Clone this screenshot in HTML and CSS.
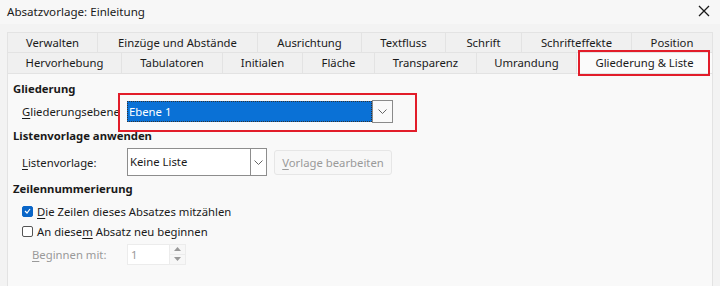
FILE: index.html
```html
<!DOCTYPE html>
<html lang="de">
<head>
  <meta charset="UTF-8" />
  <title>Absatzvorlage: Einleitung</title>
  <link rel="stylesheet" href="styles.css">
</head>
<body>
<div class="dialog">
  <div class="titlebar">
    <span class="title">Absatzvorlage: Einleitung</span>
    <svg class="close" width="12" height="12" viewBox="0 0 12 12">
      <path d="M1 1 L11 11 M11 1 L1 11" stroke="#1a1a1a" stroke-width="1.3" fill="none" />
    </svg>
  </div>

  <div class="tabs">
    <div class="tab-row row1">
      <div class="tab">Verwalten</div>
      <div class="tab">Einzüge und Abstände</div>
      <div class="tab">Ausrichtung</div>
      <div class="tab">Textfluss</div>
      <div class="tab">Schrift</div>
      <div class="tab">Schrifteffekte</div>
      <div class="tab">Position</div>
    </div>
    <div class="tab-row row2">
      <div class="tab">Hervorhebung</div>
      <div class="tab">Tabulatoren</div>
      <div class="tab">Initialen</div>
      <div class="tab">Fläche</div>
      <div class="tab">Transparenz</div>
      <div class="tab">Umrandung</div>
      <div class="tab active">Gliederung &amp; Liste<span class="mark tab-mark"></span></div>
    </div>
  </div>

  <div class="panel">
    <div class="heading">Gliederung</div>
    <div class="field-row outline-row">
      <label class="label"><u>G</u>liederungsebene</label>
      <div class="select level-select">
        <span class="select-value">Ebene 1</span>
        <span class="select-btn"><svg width="9" height="5" viewBox="0 0 9 5"><path d="M0.5 0.5 L4.5 4.5 L8.5 0.5" stroke="#666" fill="none"/></svg></span>
      </div>
      <span class="mark level-mark"></span>
    </div>

    <div class="heading list-heading">Listenvorlage anwenden</div>
    <div class="field-row list-row">
      <label class="label"><u>L</u>istenvorlage:</label>
      <div class="combo">
        <span class="combo-value">Keine Liste</span>
        <span class="combo-btn"><svg width="9" height="5" viewBox="0 0 9 5"><path d="M0.5 0.5 L4.5 4.5 L8.5 0.5" stroke="#666" fill="none"/></svg></span>
      </div>
      <div class="button disabled"><u>V</u>orlage bearbeiten</div>
    </div>

    <div class="heading numbering-heading">Zeilennummerierung</div>
    <div class="check-row first-check">
      <span class="checkbox checked"><svg width="7" height="6" viewBox="0 0 7 6"><path d="M1 3 L3 5 L6 1" stroke="#fff" stroke-width="1.2" fill="none"/></svg></span>
      <span><u>D</u>ie Zeilen dieses Absatzes mitzählen</span>
    </div>
    <div class="check-row">
      <span class="checkbox"></span>
      <span>An diese<u>m</u> Absatz neu beginnen</span>
    </div>
    <div class="field-row start-row">
      <label class="label dim"><u>B</u>eginnen mit:</label>
      <div class="spin">
        <span class="spin-value">1</span>
        <span class="spin-btns">
          <span class="spin-btn"><svg width="7" height="4" viewBox="0 0 7 4"><path d="M0 4 L3.5 0 L7 4 Z" fill="#999"/></svg></span>
          <span class="spin-btn"><svg width="7" height="4" viewBox="0 0 7 4"><path d="M0 0 L3.5 4 L7 0 Z" fill="#999"/></svg></span>
        </span>
      </div>
    </div>
  </div>
</div>
</body>
</html>
```

FILE: styles.css
```css
body {
  margin: 0;
  padding: 0;
  background: #f3f3f3;
  font-family: 'Noto Sans', 'Open Sans', sans-serif;
  font-size: 11.3px;
  color: #1a1a1a;
}
u {
  text-decoration: underline;
  text-underline-offset: 2px;
}
.dialog {
  width: 720px;
  height: 286px;
  overflow: hidden;
  position: relative;
}
.titlebar {
  height: 24px;
  box-sizing: border-box;
  display: flex;
  align-items: center;
  justify-content: space-between;
  padding: 0 8px 2px 7px;
  background: #f7f7f7;
  font-size: 11.6px;
}
.close {
  margin-right: 2px;
}
.tabs {
  padding: 8px 7px 0 7px;
}
.tab-row {
  display: grid;
  height: 20px;
}
.row1 {
  grid-template-columns: 91px 160px 104px 84px 76px 110px 81px;
}
.row2 {
  grid-template-columns: 115px 101px 80px 72px 102px 100px 136px;
  height: 21px;
}
.tab {
  background: #f0f0f0;
  border-top: 1px solid #e3e3e3;
  border-right: 1px solid #e3e3e3;
  text-align: center;
  line-height: 19px;
  white-space: nowrap;
  position: relative;
}
.tab:first-child {
  border-left: 1px solid #e3e3e3;
}
.tab.active {
  background: #fbfbfb;
}
.mark {
  position: absolute;
  border: 2px solid #e21d2a;
  box-sizing: border-box;
}
.tab-mark {
  left: 1px;
  top: -3px;
  width: 132px;
  height: 26px;
}
.panel {
  margin: 0 7px;
  height: 220px;
  background: #f9f9f9;
  border-left: 1px solid #e3e3e3;
  border-right: 1px solid #e3e3e3;
  border-top: 1px solid #e3e3e3;
  padding: 6px 0 0 5px;
}
.heading {
  font-weight: bold;
  line-height: 17px;
}
.list-heading {
  margin-top: 2px;
}
.numbering-heading {
  margin-top: 3px;
}
.field-row {
  display: flex;
  align-items: center;
  position: relative;
}
.label {
  width: 114px;
  padding-left: 9px;
  box-sizing: border-box;
  white-space: nowrap;
}
.label.dim {
  color: #9a9a9a;
  padding-left: 19px;
}
.outline-row {
  height: 28px;
}
.select {
  display: flex;
  width: 266px;
  height: 23px;
  box-sizing: border-box;
}
.select-value {
  flex: 1;
  background: #0a71d6;
  color: #fff;
  border: 1px dotted #333;
  line-height: 19px;
  padding-left: 1px;
  margin: 1px 0;
}
.select-btn, .combo-btn {
  width: 21px;
  display: flex;
  align-items: center;
  justify-content: center;
  background: #fafafa;
  border: 1px solid #8a8a8a;
  box-sizing: border-box;
}
.level-mark {
  left: 105px;
  top: -4px;
  width: 299px;
  height: 39px;
}
.list-row {
  height: 30px;
  margin-top: 3px;
}
.combo {
  display: flex;
  width: 140px;
  height: 28px;
  background: #fff;
  border: 1px solid #8d8d8d;
  box-sizing: border-box;
}
.combo-value {
  flex: 1;
  line-height: 26px;
  padding-left: 2px;
}
.combo-btn {
  border: none;
  border-left: 1px solid #8d8d8d;
  background: #fff;
  width: 16px;
}
.button {
  margin-left: 7px;
  width: 118px;
  height: 25px;
  line-height: 23px;
  box-sizing: border-box;
  border: 1px solid #e6e6e6;
  border-radius: 3px;
  background: #f7f7f7;
  text-align: center;
}
.button.disabled {
  color: #9a9a9a;
}
.check-row {
  display: flex;
  align-items: center;
  height: 20px;
  padding-left: 9px;
}
.first-check {
  margin-top: 4px;
}
.checkbox {
  width: 11px;
  height: 11px;
  box-sizing: border-box;
  border: 1px solid #555;
  border-radius: 2px;
  margin-right: 4px;
  display: flex;
  align-items: center;
  justify-content: center;
  background: #fff;
}
.checkbox.checked {
  background: #0a66c8;
  border-color: #0a66c8;
}
.start-row {
  height: 26px;
}
.spin {
  display: flex;
  width: 59px;
  height: 21px;
  box-sizing: border-box;
  border: 1px solid #ececec;
  background: #fff;
}
.spin-value {
  flex: 1;
  color: #9a9a9a;
  line-height: 19px;
  padding-left: 3px;
}
.spin-btns {
  width: 15px;
  display: flex;
  flex-direction: column;
  border-left: 1px solid #ececec;
  background: #f7f7f7;
}
.spin-btn {
  flex: 1;
  display: flex;
  align-items: center;
  justify-content: center;
}
.spin-btn + .spin-btn {
  border-top: 1px solid #ececec;
}
```
